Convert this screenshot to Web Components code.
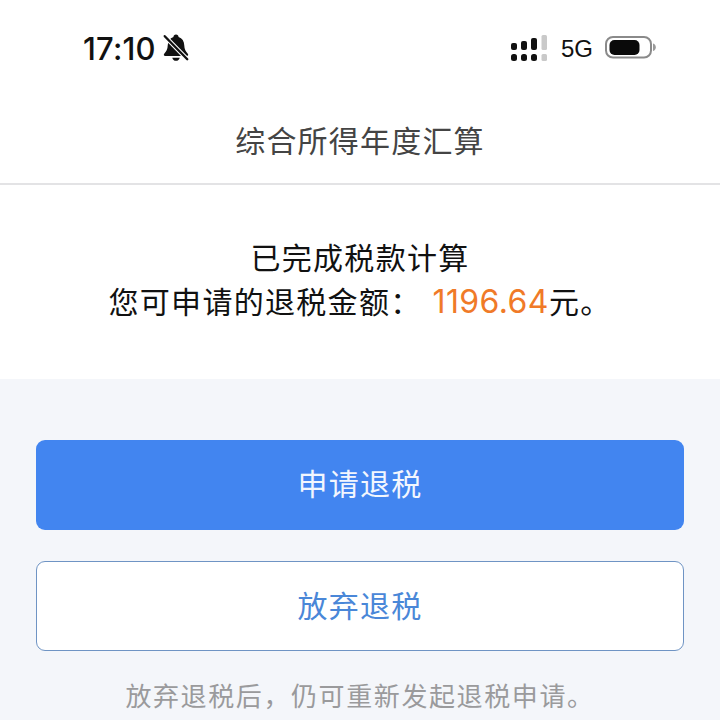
<!DOCTYPE html>
<html><head><meta charset="utf-8">
<style>
html,body{margin:0;padding:0;background:#f4f6fa;}
body{width:720px;height:720px;overflow:hidden;font-family:"Noto Sans CJK SC","Liberation Sans",sans-serif;}
</style></head>
<body>
<tax-screen></tax-screen>
<script>
class StatusBar extends HTMLElement{constructor(){super();this.attachShadow({mode:'open'}).innerHTML=`
<style>
:host{display:flex;box-sizing:border-box;height:100px;background:#fff;justify-content:space-between;align-items:flex-start;padding:30px 64px 0 83px;}
.l,.r{display:flex;align-items:center;height:38px;}
.t{font:500 31px/38px Inter,"Liberation Sans",sans-serif;color:#111;letter-spacing:.2px;}
.g{font:400 24px/38px "Liberation Sans",sans-serif;color:#111;margin:0 12px 0 14px;}
svg{display:block}
</style>
<div class="l"><span class="t">17:10</span>
<svg style="margin:-3px 0 0 5px" width="30" height="30" viewBox="0 0 28 28"><path d="M14 1.500c-1.500 0-2.300 1-2.400 2.200C8.200 4.800 6.400 7.700 6.300 11.500c-.1 4-1.500 6-3.300 7.800-.8.8-.3 2.200 1 2.200h20c1.300 0 1.800-1.400 1-2.200-1.800-1.800-3.200-3.800-3.300-7.800-.1-3.800-1.900-6.700-5.300-7.800C16.300 2.500 15.500 1.500 14 1.500zM10.500 23c.4 1.800 1.800 3 3.500 3s3.100-1.200 3.500-3z" fill="#111"/><path d="M3.500 3l21 21.500" stroke="#fff" stroke-width="4.200"/><path d="M3.500 3l21 21.500" stroke="#111" stroke-width="2.200" stroke-linecap="round"/></svg></div>
<div class="r">
<svg style="margin-top:-2px" width="36" height="26" viewBox="0 0 36 26"><g fill="#111"><rect x="0" y="8" width="6" height="7" rx="2"/><rect x="10" y="6" width="6" height="9" rx="2"/><rect x="20" y="3" width="6" height="12" rx="2"/><rect x="0" y="19" width="6" height="7" rx="2.500"/><rect x="10" y="19" width="6" height="7" rx="2.500"/><rect x="20" y="19" width="6" height="7" rx="2.500"/></g><g fill="#c9c9c9"><rect x="30.500" y="0" width="5.500" height="15" rx="1.500"/><rect x="30.500" y="19" width="5.500" height="7" rx="1.500"/></g></svg>
<span class="g">5G</span>
<svg width="51" height="26" viewBox="0 0 51 26"><rect x="1" y="1" width="45" height="20.500" rx="7" fill="none" stroke="#8a8a8a" stroke-width="2"/><rect x="4.500" y="4" width="30" height="15" rx="5" fill="#0a0a0a"/><path d="M48 7.500c2 .6 2.800 2 2.800 3.800s-.8 3.200-2.800 3.800z" fill="#999"/></svg>
</div>`}}
customElements.define('status-bar',StatusBar);

class NavTitle extends HTMLElement{constructor(){super();this.attachShadow({mode:'open'}).innerHTML=`
<style>:host{display:flex;box-sizing:border-box;height:85px;background:#fff;align-items:center;justify-content:center;padding-bottom:6px;border-bottom:2px solid #e3e3e5;font-size:30px;color:#444;letter-spacing:1.200px;}</style><slot></slot>`}}
customElements.define('nav-title',NavTitle);

class ResultPanel extends HTMLElement{constructor(){super();this.attachShadow({mode:'open'}).innerHTML=`
<style>:host{display:flex;flex-direction:column;align-items:center;box-sizing:border-box;height:194px;background:#fff;padding-top:49px;font-size:30px;line-height:44px;color:#111;letter-spacing:1.300px;}
.line{display:flex;align-items:baseline;white-space:pre;}
.n{color:#f07a28;font-family:Inter,"Liberation Sans",sans-serif;font-weight:400;letter-spacing:.4px;margin-left:11px;font-size:32px;}</style>
<div class="line">已完成税款计算</div>
<div class="line"><span>您可申请的退税金额：</span><span class="n">1196.64</span><span>元。</span></div>`}}
customElements.define('result-panel',ResultPanel);

class ActionButton extends HTMLElement{constructor(){super();this.attachShadow({mode:'open'}).innerHTML=`
<style>:host{display:flex;box-sizing:border-box;height:90px;align-items:center;justify-content:center;border-radius:9px;font-size:30px;letter-spacing:1.200px;padding-bottom:6px;}
:host([variant=primary]){background:#4285f0;color:#f2f6fe;}
:host([variant=outline]){background:#fff;color:#4a87d8;border:1.500px solid #6f94c4;padding-bottom:4px;}</style><slot></slot>`}}
customElements.define('action-button',ActionButton);

class TaxScreen extends HTMLElement{constructor(){super();this.attachShadow({mode:'open'}).innerHTML=`
<style>:host{display:block;width:720px;height:720px;overflow:hidden;background:#f4f6fa;}
.actions{display:flex;flex-direction:column;gap:31px;padding:61px 36px 0;}
.note{margin-top:24px;text-align:center;font-size:26px;line-height:40px;color:#9a9a9c;letter-spacing:1.600px;white-space:nowrap;}</style>
<status-bar></status-bar>
<nav-title>综合所得年度汇算</nav-title>
<result-panel></result-panel>
<div class="actions">
<action-button variant="primary">申请退税</action-button>
<action-button variant="outline">放弃退税</action-button>
</div>
<div class="note">放弃退税后，仍可重新发起退税申请。</div>`}}
customElements.define('tax-screen',TaxScreen);
</script>
</body></html>
